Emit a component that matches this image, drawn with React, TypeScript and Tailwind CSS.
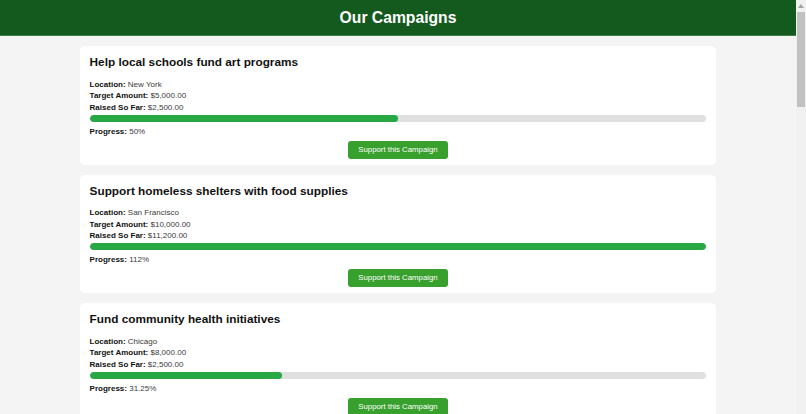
import React from "react";

type Campaign = {
  id: number;
  title: string;
  location: string;
  target: number;
  raised: number;
};

const CAMPAIGNS: Campaign[] = [
  { id: 1, title: "Help local schools fund art programs", location: "New York", target: 5000, raised: 2500 },
  { id: 2, title: "Support homeless shelters with food supplies", location: "San Francisco", target: 10000, raised: 11200 },
  { id: 3, title: "Fund community health initiatives", location: "Chicago", target: 8000, raised: 2500 },
];

const money = (n: number) =>
  "$" + n.toLocaleString("en-US", { minimumFractionDigits: 2, maximumFractionDigits: 2 });

function CampaignCard({ c }: { c: Campaign }) {
  const pct = (c.raised / c.target) * 100;
  const label = `${Math.round(pct * 100) / 100}%`;

  return (
    <article className="w-[80%] rounded-[5px] bg-white px-[10px] pb-[6px] pt-[8px]">
      <h2 className="text-[11.8px] font-bold leading-[16px] text-[#111]">{c.title}</h2>

      <div className="mt-[8.5px] text-[8px] leading-[11.5px] text-[#3a3a3a]">
        <p>
          <b className="text-[#111]">Location:</b> {c.location}
        </p>
        <p>
          <b className="text-[#111]">Target Amount:</b> {money(c.target)}
        </p>
        <p>
          <b className="text-[#111]">Raised So Far:</b> {money(c.raised)}
        </p>
      </div>

      {/* progress bar */}
      <div className="mt-[1.5px] h-[7px] w-full overflow-hidden rounded-full bg-[#e0e0e0]">
        <div className="h-full rounded-full bg-[#28a745]" style={{ width: `${Math.min(pct, 100)}%` }} />
      </div>

      <p className="mt-[4px] text-[8px] leading-[11.5px] text-[#3a3a3a]">
        <b className="text-[#111]">Progress:</b> {label}
      </p>

      <div className="mt-[3.5px] flex justify-center">
        <button className="h-[18px] rounded-[3px] bg-[#38a02c] px-[10px] text-[7.8px] text-white">
          Support this Campaign
        </button>
      </div>
    </article>
  );
}

export default function App() {
  return (
    <div className="flex h-screen overflow-hidden bg-[#f4f4f4] [font-family:'Liberation_Sans',Arial,sans-serif]">
      <div className="min-w-0 flex-1 overflow-hidden">
        <header className="flex h-[36px] items-center justify-center border-b border-[#3d7a44] bg-[#145a1e]">
          <h1 className="text-[15.7px] font-bold text-white">Our Campaigns</h1>
        </header>

        <main className="flex flex-col items-center gap-[10px] py-[10px]">
          {CAMPAIGNS.map((c) => (
            <CampaignCard key={c.id} c={c} />
          ))}
        </main>
      </div>

      {/* scrollbar rail */}
      <div className="flex w-[10px] shrink-0 flex-col items-center bg-[#f1f1f1]">
        <svg width="6" height="4" viewBox="0 0 6 4" className="mt-[4px]">
          <path d="M3 0L6 4H0Z" fill="#a3a3a3" />
        </svg>
        <div className="mt-[4px] h-[95px] w-[8px] bg-[#c1c1c1]" />
      </div>
    </div>
  );
}
